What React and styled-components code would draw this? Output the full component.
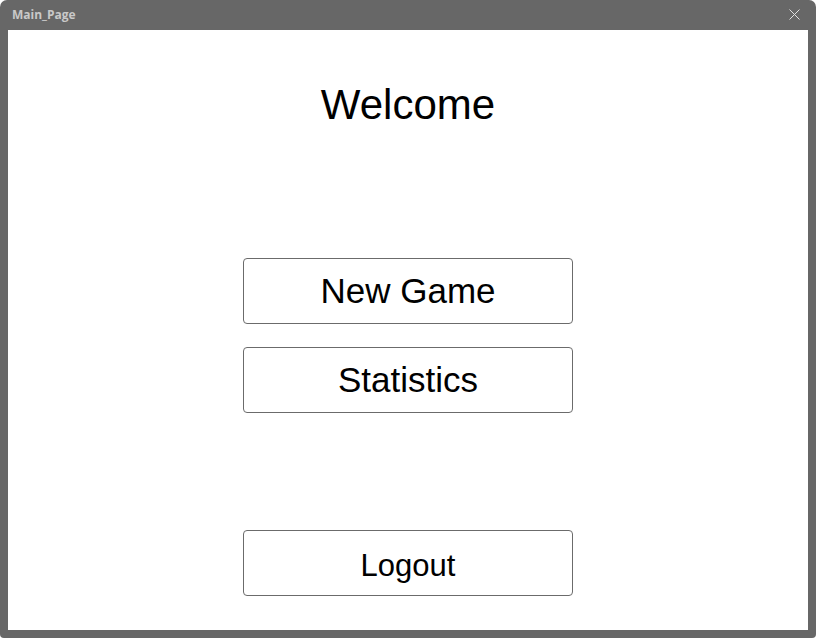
import React from 'react';
import styled, { createGlobalStyle } from 'styled-components';

const GlobalStyle = createGlobalStyle`
  html, body {
    margin: 0;
    padding: 0;
    background: #ffffff;
  }
  * {
    box-sizing: border-box;
  }
`;

const Window = styled.div`
  width: 816px;
  height: 638px;
  background: #676767;
  border-radius: 7px 7px 4px 4px;
  display: flex;
  flex-direction: column;
  padding: 0 8px 8px;
`;

const TitleBar = styled.div`
  height: 30px;
  display: flex;
  align-items: center;
  justify-content: space-between;
  padding: 0 4px 0 4px;
`;

const WindowTitle = styled.span`
  font-family: 'Open Sans', 'Liberation Sans', sans-serif;
  font-weight: 700;
  font-size: 12px;
  color: #c9c9c9;
  margin-top: -1px;
`;

const CloseButton = styled.button`
  border: none;
  background: none;
  padding: 0;
  width: 14px;
  height: 14px;
  display: flex;
  align-items: center;
  justify-content: center;
  margin-right: 3px;
  margin-top: -1px;
  cursor: pointer;
`;

const Content = styled.main`
  flex: 1;
  background: #ffffff;
  display: flex;
  flex-direction: column;
  align-items: center;
  padding: 51px 0 34px;
`;

const Heading = styled.h1`
  margin: 0;
  font-family: 'Liberation Sans', Arial, sans-serif;
  font-weight: 400;
  font-size: 42px;
  line-height: 48px;
  color: #000;
`;

const Menu = styled.nav`
  display: flex;
  flex-direction: column;
  gap: 23px;
  margin-top: 129px;
`;

const MenuButton = styled.button`
  width: 330px;
  height: 66px;
  background: #ffffff;
  border: 1px solid #6b6b6b;
  border-radius: 4px;
  font-family: 'Liberation Sans', Arial, sans-serif;
  font-size: ${(p) => p.$size || 35}px;
  color: #000;
  padding: ${(p) => (p.$bottom ? '5px 0 0' : '0')};
  margin-top: ${(p) => (p.$bottom ? 'auto' : '0')};
  cursor: pointer;
`;

const CloseIcon = () => (
  <svg width="11" height="11" viewBox="0 0 11 11">
    <path d="M0.5 0.5 L10.5 10.5 M10.5 0.5 L0.5 10.5" stroke="#e0e0e0" strokeWidth="1" />
  </svg>
);

export default function App() {
  return (
    <>
      <GlobalStyle />
      <Window>
        <TitleBar>
          <WindowTitle>Main_Page</WindowTitle>
          <CloseButton aria-label="Close">
            <CloseIcon />
          </CloseButton>
        </TitleBar>
        <Content>
          <Heading>Welcome</Heading>
          <Menu>
            <MenuButton>New Game</MenuButton>
            <MenuButton>Statistics</MenuButton>
          </Menu>
          <MenuButton $bottom $size={31}>
            Logout
          </MenuButton>
        </Content>
      </Window>
    </>
  );
}
